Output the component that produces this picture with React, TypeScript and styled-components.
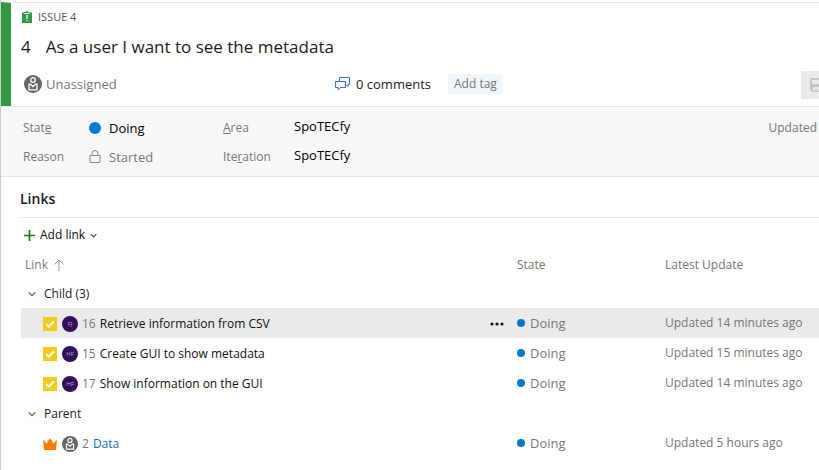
import React from "react";
import styled, { createGlobalStyle } from "styled-components";

const GlobalStyle = createGlobalStyle`
  *, *::before, *::after { box-sizing: border-box; }
  html, body { margin: 0; padding: 0; }
  body {
    background: #fff;
    color: #1b1b1b;
    font-family: "Segoe UI", "Open Sans", "Noto Sans", sans-serif;
    font-size: 13px;
    line-height: 20px;
    overflow: hidden;
  }
  button, input { font: inherit; color: inherit; }
  button { border: 0; background: none; padding: 0; cursor: pointer; }
  svg { display: block; flex: none; }
`;

const Page = styled.main`
  min-height: 100vh;
  padding-top: 2px;
  border-left: 1px solid #ccc;
  overflow: hidden;
`;

const Header = styled.header`
  display: flex;
  flex-direction: column;
  height: 104px;
  padding: 3px 0 0 10px;
  border-left: 10px solid #339947;
  border-top: 1px solid #e6e6e6;
`;

const IssueKind = styled.div`
  display: flex;
  align-items: center;
  gap: 6px;
  height: 22px;
  padding-left: 1px;
  font-size: 11px;
  color: #555;
`;

const TitleRow = styled.div`
  display: flex;
  align-items: center;
  gap: 15px;
  height: 38px;
  font-size: 17px;
  line-height: 24px;
`;

const TitleInput = styled.input`
  flex: 1;
  min-width: 0;
  padding: 0;
  border: 0;
  outline: 0;
  background: none;
`;

const MetaRow = styled.div`
  display: flex;
  align-items: center;
  height: 36px;
`;

const Assignee = styled.button`
  display: flex;
  align-items: center;
  gap: 4px;
  width: 314px;
  padding-left: 3px;
  color: #777;
`;

const Comments = styled.a`
  display: flex;
  align-items: center;
  gap: 6px;
  color: #222;
  text-decoration: none;
`;

const AddTag = styled.button`
  height: 20px;
  margin-left: 17px;
  padding: 0 6px;
  background: #eff6fc;
  color: #777;
  font-size: 12px;
`;

const SaveButton = styled.button`
  flex: none;
  display: flex;
  align-items: center;
  height: 28px;
  width: 88px;
  margin: 2px -70px 0 auto;
  padding-left: 8px;
  background: #eaeaea;
`;

const Details = styled.section`
  display: grid;
  grid-template-columns: 66px 134px 71px 1fr auto;
  grid-template-rows: 29px 29px;
  align-items: center;
  height: 71px;
  padding: 6px 2px 6px 22px;
  border: solid #e6e6e6;
  border-width: 1px 0;
  background: #f8f8f8;
`;

const FieldLabel = styled.label`
  font-size: 12px;
  color: #777;
`;

const Field = styled.div`
  display: flex;
  align-items: center;
  gap: 8px;
`;

const FieldInput = styled.input<{ $muted?: boolean }>`
  width: 100%;
  min-width: 0;
  padding: 0;
  border: 0;
  outline: 0;
  background: none;
  color: ${(p) => (p.$muted ? "#777" : "#000")};
`;

const PathInput = styled(FieldInput)`
  padding-bottom: 3px;
`;

const UpdatedNote = styled.span`
  font-size: 12px;
  color: #777;
`;

const Dot = styled.span<{ $size: number }>`
  flex: none;
  width: ${(p) => p.$size}px;
  height: ${(p) => p.$size}px;
  border-radius: 50%;
  background: #007acc;
`;

const Links = styled.section`
  padding-left: 19px;
`;

const Heading = styled.h2`
  height: 41px;
  margin: 0;
  padding-top: 12px;
  border-bottom: 1px solid #e6e6e6;
  font-size: 14px;
  line-height: 20px;
  font-weight: 600;
`;

const AddLink = styled.button`
  display: flex;
  align-items: center;
  gap: 5px;
  height: 34px;
  padding-left: 4px;
  font-size: 12px;
  color: #111;
`;

const Table = styled.table`
  width: calc(100% - 1px);
  margin-left: 1px;
  border-collapse: collapse;
  table-layout: fixed;
  text-align: left;
`;

const LinkCol = styled.col``;
const StateCol = styled.col`
  width: 148px;
`;
const UpdateCol = styled.col`
  width: 158px;
`;

const HeadCell = styled.th`
  height: 26px;
  padding: 0 4px;
  font-size: 12px;
  font-weight: 400;
  color: #777;
`;

const SortButton = styled.button`
  display: flex;
  align-items: center;
  gap: 6px;
`;

const GroupCell = styled.th`
  height: 30px;
  padding: 2px 7px 0;
  font-size: 12px;
  font-weight: 400;
`;

const GroupToggle = styled.button`
  display: flex;
  align-items: center;
  gap: 8px;
`;

const Row = styled.tr<{ $selected?: boolean }>`
  background: ${(p) => (p.$selected ? "#eaeaea" : "transparent")};
`;

const Cell = styled.td<{ $small?: boolean }>`
  height: 30px;
  padding: 0 4px;
  color: #777;
  font-size: ${(p) => (p.$small ? 12 : 13)}px;
  white-space: nowrap;
`;

const LinkContent = styled.div`
  display: flex;
  align-items: center;
  gap: 4px;
  padding: 2px 5px 0 18px;
  font-size: 12px;
`;

const Kind = styled.span`
  display: flex;
  margin-right: 1px;
`;

const ItemLink = styled.a<{ $plain: boolean }>`
  color: ${(p) => (p.$plain ? "#111" : "#106ebe")};
  text-decoration: none;
`;

const Avatar = styled.span`
  display: grid;
  place-items: center;
  width: 16px;
  height: 16px;
  border-radius: 50%;
  background: #32105c;
  color: #b9a8cc;
  font-size: 6px;
  line-height: 8px;
`;

const MoreButton = styled.button`
  margin-left: auto;
`;

const StateValue = styled.span`
  display: flex;
  align-items: center;
  gap: 5px;
`;

const UnassignedIcon = ({ size }: { size: number }) => (
  <svg width={size} height={size} viewBox="0 0 18 18" aria-hidden="true">
    <circle cx="9" cy="9" r="9" fill="#666" />
    <g fill="none" stroke="#fff" strokeWidth="1.3">
      <circle cx="9" cy="5" r="2.3" />
      <path d="M5 9.2v5.6h8V9.2h-1.400L9 11.600 6.400 9.200z" />
    </g>
  </svg>
);

const IssueIcon = () => (
  <svg width="10" height="12" viewBox="0 0 10 12" aria-hidden="true">
    <path d="M0 1.5h2.5V1H4a1 1 0 0 1 2 0h1.500v.5H10V12H0z" fill="#339947" />
    <path d="M2.500 2.500h5M5 4v4M5 9v1.300" stroke="#fff" strokeWidth="1.200" />
  </svg>
);

const CommentsIcon = () => (
  <svg width="15" height="14" viewBox="0 0 15 14" fill="none" stroke="#2b73cf" aria-hidden="true">
    <path d="M4.500 4V.5h10v7h-1.500v2L11 7.500" />
    <path d="M.5 4.500h10v6H5.500L3 13v-2.500H.5z" />
  </svg>
);

const SaveIcon = () => (
  <svg width="16" height="16" viewBox="0 0 16 16" aria-hidden="true">
    <path d="M1 1h14v14H3l-2-2zM3 3v4h10V3zM4 10v4h2v-2h2v2h4v-4z" fill="#c6c6c6" fillRule="evenodd" />
  </svg>
);

const LockIcon = () => (
  <svg width="12" height="14" viewBox="0 0 12 14" fill="none" stroke="#888" aria-hidden="true">
    <path d="M1 5.500h10v7H1zM3 5.500V3.500a3 3 0 0 1 6 0v2" />
  </svg>
);

const PlusIcon = () => (
  <svg width="11" height="11" viewBox="0 0 11 11" stroke="#107c10" strokeWidth="1.600" aria-hidden="true">
    <path d="M5.500 0v11M0 5.500h11" />
  </svg>
);

const Chevron = ({ size, color }: { size: number; color: string }) => (
  <svg width={size} height={size} viewBox="0 0 8 8" fill="none" stroke={color} strokeWidth="1.200" aria-hidden="true">
    <path d="M.8 2.400 4 5.600l3.200-3.200" />
  </svg>
);

const ArrowUp = () => (
  <svg width="10" height="12" viewBox="0 0 10 12" fill="none" stroke="#999" aria-hidden="true">
    <path d="M5 12V1M.5 5.500 5 1l4.500 4.500" />
  </svg>
);

const TaskIcon = () => (
  <svg width="14" height="14" viewBox="0 0 14 14" aria-hidden="true">
    <rect width="14" height="14" fill="#f2cb1d" />
    <path d="m3.200 7.200 2.600 2.600 5-5.400" fill="none" stroke="#fff" strokeWidth="2" />
  </svg>
);

const CrownIcon = () => (
  <svg width="14" height="12" viewBox="0 0 14 12" aria-hidden="true">
    <path d="M1 12 0 1.500l3.500 4L7 0l3.500 5.500 3.500-4L13 12z" fill="#ff7b00" />
  </svg>
);

const MoreIcon = () => (
  <svg width="14" height="4" viewBox="0 0 14 4" fill="#111" aria-hidden="true">
    <circle cx="2" cy="2" r="1.600" />
    <circle cx="7" cy="2" r="1.600" />
    <circle cx="12" cy="2" r="1.600" />
  </svg>
);

type Item = {
  id: number;
  title: string;
  initials?: string;
  updated: string;
  selected?: boolean;
};

const groups: { name: string; items: Item[] }[] = [
  {
    name: "Child (3)",
    items: [
      { id: 16, title: "Retrieve information from CSV", initials: "FJ", updated: "Updated 14 minutes ago", selected: true },
      { id: 15, title: "Create GUI to show metadata", initials: "HF", updated: "Updated 15 minutes ago" },
      { id: 17, title: "Show information on the GUI", initials: "HF", updated: "Updated 14 minutes ago" },
    ],
  },
  { name: "Parent", items: [{ id: 2, title: "Data", updated: "Updated 5 hours ago" }] },
];

const ItemRow = ({ item }: { item: Item }) => (
  <Row $selected={item.selected}>
    <Cell>
      <LinkContent>
        <Kind>{item.initials ? <TaskIcon /> : <CrownIcon />}</Kind>
        {item.initials ? <Avatar>{item.initials}</Avatar> : <UnassignedIcon size={16} />}
        <span>{item.id}</span>
        <ItemLink href="#" $plain={Boolean(item.initials)}>
          {item.title}
        </ItemLink>
        {item.selected && (
          <MoreButton aria-label="More actions">
            <MoreIcon />
          </MoreButton>
        )}
      </LinkContent>
    </Cell>
    <Cell>
      <StateValue>
        <Dot $size={8} />
        Doing
      </StateValue>
    </Cell>
    <Cell $small>{item.updated}</Cell>
  </Row>
);

export default function App() {
  return (
    <>
      <GlobalStyle />
      <Page>
        <Header>
          <IssueKind>
            <IssueIcon />
            ISSUE 4
          </IssueKind>
          <TitleRow>
            <span>4</span>
            <TitleInput aria-label="Title" defaultValue="As a user I want to see the metadata" />
          </TitleRow>
          <MetaRow>
            <Assignee>
              <UnassignedIcon size={18} />
              Unassigned
            </Assignee>
            <Comments href="#">
              <CommentsIcon />0 comments
            </Comments>
            <AddTag>Add tag</AddTag>
            <SaveButton aria-label="Save">
              <SaveIcon />
            </SaveButton>
          </MetaRow>
        </Header>
        <Details>
          <FieldLabel htmlFor="state">
            Stat<u>e</u>
          </FieldLabel>
          <Field>
            <Dot $size={12} />
            <FieldInput id="state" defaultValue="Doing" />
          </Field>
          <FieldLabel htmlFor="area">
            <u>A</u>rea
          </FieldLabel>
          <PathInput id="area" defaultValue="SpoTECfy" />
          <UpdatedNote>Updated</UpdatedNote>
          <FieldLabel htmlFor="reason">Reason</FieldLabel>
          <Field>
            <LockIcon />
            <FieldInput id="reason" $muted readOnly defaultValue="Started" />
          </Field>
          <FieldLabel htmlFor="iteration">
            Ite<u>r</u>ation
          </FieldLabel>
          <PathInput id="iteration" defaultValue="SpoTECfy" />
        </Details>
        <Links>
          <Heading>Links</Heading>
          <AddLink>
            <PlusIcon />
            Add link
            <Chevron size={7} color="#444" />
          </AddLink>
          <Table>
            <colgroup>
              <LinkCol />
              <StateCol />
              <UpdateCol />
            </colgroup>
            <thead>
              <tr>
                <HeadCell>
                  <SortButton>
                    Link
                    <ArrowUp />
                  </SortButton>
                </HeadCell>
                <HeadCell>State</HeadCell>
                <HeadCell>Latest Update</HeadCell>
              </tr>
            </thead>
            {groups.map((group) => (
              <tbody key={group.name}>
                <tr>
                  <GroupCell colSpan={3}>
                    <GroupToggle aria-expanded="true">
                      <Chevron size={8} color="#8a4b1f" />
                      {group.name}
                    </GroupToggle>
                  </GroupCell>
                </tr>
                {group.items.map((item) => (
                  <ItemRow key={item.id} item={item} />
                ))}
              </tbody>
            ))}
          </Table>
        </Links>
      </Page>
    </>
  );
}
